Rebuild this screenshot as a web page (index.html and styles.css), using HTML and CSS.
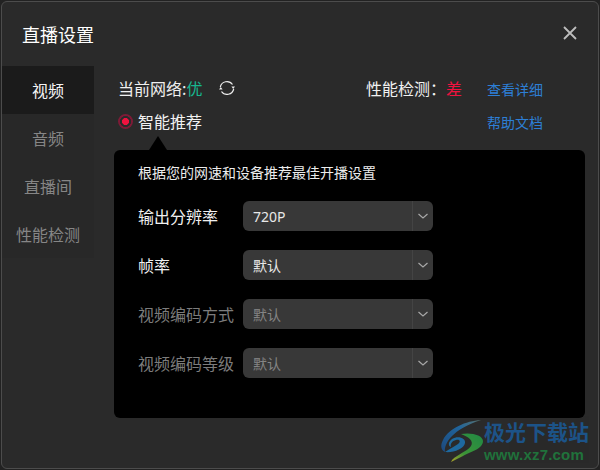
FILE: index.html
```html
<!DOCTYPE html>
<html lang="zh-CN">
<head>
<meta charset="utf-8">
<title>直播设置</title>
<link rel="stylesheet" href="styles.css">
</head>
<body>
<div class="window">
  <header class="titlebar">
    <h1 class="title">直播设置</h1>
    <svg class="close" width="14" height="14" viewBox="0 0 14 14"><path d="M1 1L13 13M13 1L1 13" stroke="#bdbdbd" stroke-width="1.8" fill="none"/></svg>
  </header>
  <div class="body">
    <nav class="sidebar">
      <div class="tab active">视频</div>
      <div class="tab">音频</div>
      <div class="tab">直播间</div>
      <div class="tab">性能检测</div>
    </nav>
    <main class="content">
      <div class="status">
        <div class="status-left">
          <div class="net"><span>当前网络:</span><span class="good">优</span>
            <svg class="refresh" width="16" height="16" viewBox="0 0 16 16"><path d="M1.300 7A6.800 6.800 0 0 1 13.500 4.500M14.700 9A6.800 6.800 0 0 1 2.500 11.500" stroke="#ececec" stroke-width="1.200" fill="none"/><path d="M12.400 6.400H16L14.200 9ZM0 9.600H3.600L1.800 7Z" fill="#ececec"/></svg>
          </div>
          <div class="radio-row"><span class="radio"></span><span>智能推荐</span></div>
        </div>
        <div class="status-right">
          <div class="perf"><span class="perf-label">性能检测：</span><span class="bad">差</span></div>
          <div class="links"><a class="link">查看详细</a><a class="link">帮助文档</a></div>
        </div>
      </div>
      <section class="panel">
        <p class="desc">根据您的网速和设备推荐最佳开播设置</p>
        <div class="row"><label class="label">输出分辨率</label><div class="select"><span class="value latin">720P</span><span class="caret"><svg width="12" height="8" viewBox="0 0 12 8"><path d="M1.500 2L6 6L10.500 2" stroke="#a8a8a8" stroke-width="1.200" fill="none"/></svg></span></div></div>
        <div class="row"><label class="label">帧率</label><div class="select"><span class="value">默认</span><span class="caret"><svg width="12" height="8" viewBox="0 0 12 8"><path d="M1.500 2L6 6L10.500 2" stroke="#a8a8a8" stroke-width="1.200" fill="none"/></svg></span></div></div>
        <div class="row off"><label class="label">视频编码方式</label><div class="select"><span class="value">默认</span><span class="caret"><svg width="12" height="8" viewBox="0 0 12 8"><path d="M1.500 2L6 6L10.500 2" stroke="#a8a8a8" stroke-width="1.200" fill="none"/></svg></span></div></div>
        <div class="row off"><label class="label">视频编码等级</label><div class="select"><span class="value">默认</span><span class="caret"><svg width="12" height="8" viewBox="0 0 12 8"><path d="M1.500 2L6 6L10.500 2" stroke="#a8a8a8" stroke-width="1.200" fill="none"/></svg></span></div></div>
      </section>
    </main>
  </div>
  <div class="watermark">
    <svg class="wm-logo" width="44" height="44" viewBox="0 0 44 44">
      <defs>
        <linearGradient id="wmGreen" x1="1" y1="0" x2="0" y2="1"><stop offset="0" stop-color="#1f9a4a"/><stop offset=".65" stop-color="#3fa63a"/><stop offset="1" stop-color="#c2b52c"/></linearGradient>
        <linearGradient id="wmBlue" x1="1" y1="0" x2="0" y2="1"><stop offset="0" stop-color="#5f7f7a"/><stop offset=".4" stop-color="#1f6fb0"/><stop offset="1" stop-color="#1b4f8c"/></linearGradient>
      </defs>
      <path d="M41 1C26 2 9 9 3 21C0 27 1 31 5 33C4 26 10 11 41 1Z" fill="url(#wmBlue)"/>
      <path d="M5 33C13 34 24 30 25 24C26 19 18 16 12 20C8 23 8 27 11 28C10 25 12 22 16 21C20 20 21 23 18 25C14 28 9 30 5 33Z" fill="#1c74b4"/>
      <path d="M21 15C31 13 43 16 43 22C43 30 30 33 23 37C19 39 15 41 11 43C13 37 27 33 31 27C34 22 29 18 21 15Z" fill="url(#wmGreen)"/>
    </svg>
    <div class="wm-text">
      <div class="wm-name">极光下载站</div>
      <div class="wm-url">www.xz7.com</div>
    </div>
  </div>
</div>
</body>
</html>
```
FILE: styles.css
```css
* { box-sizing: border-box; }
html, body { margin: 0; padding: 0; background: #222; }
body {
  width: 600px; height: 470px; overflow: hidden;
  font-family: "Noto Sans CJK SC", "Liberation Sans", sans-serif;
  color: #f2f2f2;
}
.window {
  position: relative;
  width: 598px; height: 468px; margin: 1px 1px;
  background: #2a2a2a;
  border: 1px solid #4c4c4c;
  border-radius: 6px;
  overflow: hidden;
}
.titlebar {
  height: 64px;
  display: flex; align-items: center; justify-content: space-between;
  padding: 0 21px 0 20px;
}
.title { margin: 0; font-size: 18px; font-weight: 400; color: #fff; line-height: 26px; }
.close { margin-bottom: 2px; }
.body { display: flex; }
.sidebar { width: 92px; flex: none; height: 192px; background: #282828; }
.tab {
  height: 48px; display: flex; align-items: center; justify-content: center;
  font-size: 16px; color: #868686;
}
.tab.active { background: #1b1b1b; color: #f5f5f5; }
.content { flex: 1; padding: 0 11px 0 20px; min-width: 0; }
.status { display: flex; justify-content: space-between; height: 84px; padding: 0 44px 0 4px; }
.net { display: flex; align-items: center; height: 24px; margin-top: 10px; font-size: 16px; color: #f0f0f0; }
.good { color: #17b78f; }
.refresh { margin-left: 17px; }
.radio-row { display: flex; align-items: center; height: 24px; margin-top: 9px; font-size: 16px; gap: 5px; }
.radio {
  width: 15px; height: 15px; border-radius: 50%;
  background: radial-gradient(circle, #f0133f 0 3.200px, #2a2a2a 3.800px 5.300px, #7e1a36 5.800px 7.500px, transparent 8px);
}
.status-right { display: flex; gap: 25px; }
.perf { height: 24px; margin-top: 10px; display: flex; align-items: center; font-size: 16px; }
.perf-label { width: 80px; }
.bad { color: #f0133f; }
.links { display: flex; flex-direction: column; margin-top: 13px; gap: 13px; }
.link { font-size: 14px; line-height: 20px; color: #2d7fd6; }
.panel {
  position: relative;
  width: 471px; height: 268px;
  background: #000; border-radius: 6px;
  padding: 13px 24px 0;
}
.panel::before {
  content: ""; position: absolute; left: 35px; top: -14px;
  border-left: 9px solid transparent; border-right: 9px solid transparent;
  border-bottom: 14px solid #000;
}
.desc { margin: 0 0 20px; font-size: 14px; line-height: 18px; color: #ececec; }
.row { display: flex; align-items: center; height: 30px; margin-bottom: 19px; font-size: 16px; color: #f0f0f0; }
.row.off { color: #7c7c7c; }
.label { width: 105px; flex: none; white-space: nowrap; }
.select {
  width: 190px; height: 30px; display: flex; align-items: center;
  background: #383838; border-radius: 6px;
}
.value { flex: 1; padding-left: 10px; font-size: 14px; color: #e8e8e8; }
.latin { font-family: "Noto Sans", "Liberation Sans", sans-serif; }
.off .value { color: #848484; }
.caret {
  width: 21px; height: 30px; display: flex; align-items: center; justify-content: center;
  border-left: 1px solid #444;
}
.watermark {
  position: absolute; left: 438px; top: 417px;
  display: flex; align-items: flex-start; opacity: .85;
}
.wm-logo { flex: none; }
.wm-name { font-size: 21px; line-height: 25px; font-weight: 700; color: #1b5b99; white-space: nowrap; }
.wm-url { font-family: "Liberation Sans", sans-serif; font-size: 15px; line-height: 17px; margin-top: 2px; font-weight: 700; color: #1f7f3f; letter-spacing: .2px; }
```
